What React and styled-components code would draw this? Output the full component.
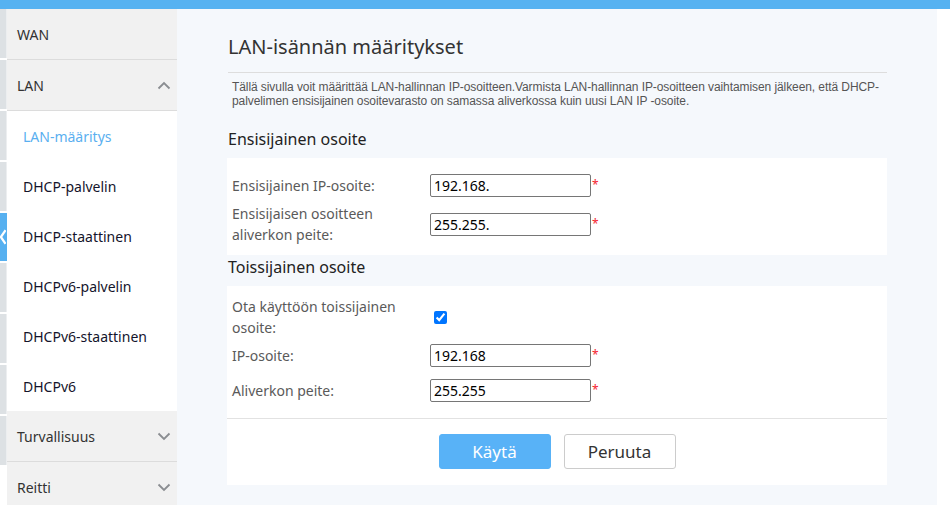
import React from 'react';
import styled, { createGlobalStyle } from 'styled-components';

const GlobalStyle = createGlobalStyle`
  html, body {
    margin: 0;
    padding: 0;
    background: #ffffff;
    font-family: "Noto Sans", "Open Sans", Arial, sans-serif;
    overflow: hidden;
  }
  * {
    box-sizing: border-box;
  }
`;

const menuTop = [{ label: 'WAN' }, { label: 'LAN', open: true }];
const subItems = [
  'LAN-määritys',
  'DHCP-palvelin',
  'DHCP-staattinen',
  'DHCPv6-palvelin',
  'DHCPv6-staattinen',
  'DHCPv6',
];
const menuBottom = ['Turvallisuus', 'Reitti'];

function Chevron({ up }) {
  return (
    <ChevronSvg width="14" height="9" viewBox="0 0 14 9">
      <path
        d={up ? 'M1.5 7.5 L7 2 L12.5 7.5' : 'M1.5 1.5 L7 7 L12.5 1.5'}
        fill="none"
        stroke="#8a8d91"
        strokeWidth="1.8"
      />
    </ChevronSvg>
  );
}

function Field({ label, value }) {
  return (
    <Row>
      <Label>{label}</Label>
      <InputCell>
        <TextInput defaultValue={value} />
        <Required>*</Required>
      </InputCell>
    </Row>
  );
}

export default function App() {
  return (
    <>
      <GlobalStyle />
      <TopBar />
      <Page>
        <EdgeStrip>
          {[0, 1, 2, 3, 4, 5, 6, 7, 8].map(i => (
            <EdgeTab key={i} active={i === 4}>
              {i === 4 && (
                <svg width="7" height="18" viewBox="0 0 7 18">
                  <path d="M6.5 1 L1 9 L6.5 17" fill="none" stroke="#fff" strokeWidth="2.6" />
                </svg>
              )}
            </EdgeTab>
          ))}
        </EdgeStrip>

        <Sidebar>
          {menuTop.map(m => (
            <GroupItem key={m.label}>
              {m.label}
              {m.open && <Chevron up />}
            </GroupItem>
          ))}
          {subItems.map((s, i) => (
            <SubItem key={s} active={i === 0}>
              {s}
            </SubItem>
          ))}
          {menuBottom.map(m => (
            <GroupItem key={m}>
              {m}
              <Chevron />
            </GroupItem>
          ))}
        </Sidebar>

        <Main>
          <Title>LAN-isännän määritykset</Title>
          <Description>
            Tällä sivulla voit määrittää LAN-hallinnan IP-osoitteen.Varmista LAN-hallinnan
            IP-osoitteen vaihtamisen jälkeen, että DHCP-palvelimen ensisijainen osoitevarasto on
            samassa aliverkossa kuin uusi LAN IP -osoite.
          </Description>

          <SectionTitle first>Ensisijainen osoite</SectionTitle>
          <Card>
            <Field label="Ensisijainen IP-osoite:" value="192.168." />
            <Field label="Ensisijaisen osoitteen aliverkon peite:" value="255.255." />
          </Card>

          <SectionTitle>Toissijainen osoite</SectionTitle>
          <Card>
            <Row>
              <Label>Ota käyttöön toissijainen osoite:</Label>
              <InputCell>
                <Checkbox type="checkbox" defaultChecked />
              </InputCell>
            </Row>
            <Field label="IP-osoite:" value="192.168" />
            <Field label="Aliverkon peite:" value="255.255" />
            <Actions>
              <PrimaryButton>Käytä</PrimaryButton>
              <SecondaryButton>Peruuta</SecondaryButton>
            </Actions>
          </Card>
        </Main>
      </Page>
    </>
  );
}

const TopBar = styled.div`
  height: 9px;
  background: #56b2f1;
`;

const Page = styled.div`
  display: flex;
  height: 496px;
`;

const EdgeStrip = styled.div`
  width: 7px;
  display: flex;
  flex-direction: column;
  gap: 2px;
  background: #ffffff;
  overflow: hidden;
`;

const EdgeTab = styled.div`
  flex: 0 0 ${p => (p.active ? '48px' : '49px')};
  display: flex;
  align-items: center;
  justify-content: center;
  background: ${p => (p.active ? '#56b0f0' : '#dde1e4')};
  border-right: 1px solid ${p => (p.active ? '#56b0f0' : '#eceef0')};
`;

const Sidebar = styled.nav`
  width: 170px;
  display: flex;
  flex-direction: column;
  background: #ffffff;
`;

const GroupItem = styled.div`
  flex: 0 0 51px;
  display: flex;
  align-items: center;
  justify-content: space-between;
  padding: 0 6px 0 10px;
  background: #f1f1f1;
  border-bottom: 1px solid #dcdcdc;
  color: #333;
  font-size: 14px;
`;

const ChevronSvg = styled.svg`
  display: block;
`;

const SubItem = styled.div`
  flex: 0 0 50px;
  display: flex;
  align-items: center;
  padding-left: 16px;
  background: #ffffff;
  color: ${p => (p.active ? '#5aaff0' : '#14142b')};
  font-size: 14px;
`;

const Main = styled.main`
  width: 760px;
  background: #f5f8fc;
  padding: 24px 50px 0 50px;
`;

const Title = styled.h1`
  margin: 0 0 0 1px;
  font-size: 20px;
  line-height: 28px;
  font-weight: 400;
  color: #333;
  padding-bottom: 11px;
  border-bottom: 1px solid #dddddd;
`;

const Description = styled.p`
  margin: 0;
  padding: 7px 0 0 5px;
  font-family: "Liberation Sans", Arial, sans-serif;
  font-size: 12px;
  line-height: 14px;
  letter-spacing: -0.08px;
  color: #555;
`;

const SectionTitle = styled.h2`
  margin: ${p => (p.first ? '19px' : '0')} 0 0 1px;
  height: 31px;
  padding-top: 1px;
  font-size: 16px;
  line-height: 22px;
  font-weight: 400;
  color: #222;
`;

const Card = styled.section`
  background: #ffffff;
  padding: 10px 0;
  &:last-child {
    padding-bottom: 0;
  }
`;

const Row = styled.div`
  display: flex;
  align-items: center;
  min-height: 35px;
  padding-left: 5px;
`;

const Label = styled.div`
  width: 198px;
  padding-right: 20px;
  font-size: 14px;
  line-height: 21px;
  color: #5a5a5a;
`;

const InputCell = styled.div`
  display: flex;
  align-items: flex-start;
`;

const TextInput = styled.input`
  width: 161px;
  height: 23px;
  border: 1px solid #767676;
  border-radius: 2px;
  padding: 0 3px;
  font-family: "Noto Sans", Arial, sans-serif;
  font-size: 14px;
  color: #000;
  outline: none;
`;

const Required = styled.span`
  color: #f5222d;
  font-size: 12px;
  line-height: 12px;
  margin-left: 1px;
  margin-top: 5px;
`;

const Checkbox = styled.input`
  width: 13px;
  height: 13px;
  margin: 0 0 0 4px;
  accent-color: #0075ff;
`;

const Actions = styled.div`
  margin-top: 10px;
  border-top: 1px solid #e2e2e2;
  padding: 15px 0 16px;
  display: flex;
  justify-content: center;
  gap: 13px;
`;

const BaseButton = styled.button`
  width: 112px;
  height: 35px;
  border-radius: 3px;
  font-family: "Noto Sans", Arial, sans-serif;
  font-size: 17px;
  cursor: pointer;
`;

const PrimaryButton = styled(BaseButton)`
  background: #58b2f7;
  border: 1px solid #58b2f7;
  color: #ffffff;
`;

const SecondaryButton = styled(BaseButton)`
  background: #ffffff;
  border: 1px solid #cccccc;
  color: #333;
`;
